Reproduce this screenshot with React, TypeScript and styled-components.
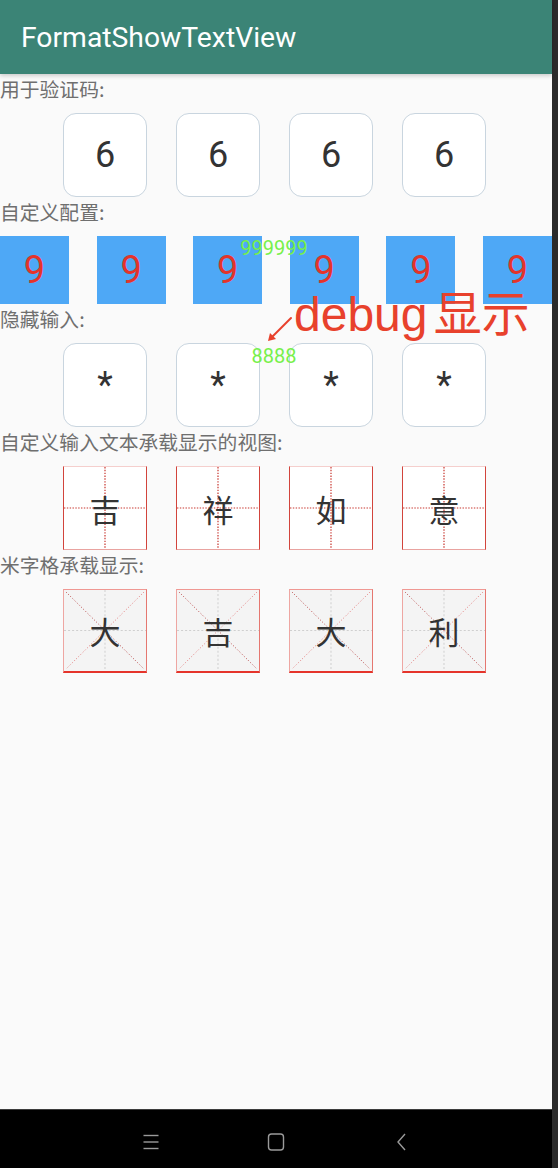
import React from "react";
import styled, { createGlobalStyle, css } from "styled-components";

const Global = createGlobalStyle`
  html, body { margin: 0; padding: 0; background: #2b2b2b; }
  body { font-family: Roboto, "Noto Sans CJK SC", sans-serif; }
  * { box-sizing: border-box; }
`;

const Screen = styled.div`
  display: flex;
  width: 558px;
  height: 1168px;
  overflow: hidden;
`;

const Phone = styled.div`
  width: 552px;
  display: flex;
  flex-direction: column;
  background: #fafafa;
`;

const Edge = styled.div`
  width: 6px;
  background: #2b2b2b;
`;

const AppBar = styled.header`
  height: 74px;
  flex-shrink: 0;
  background: #3b8476;
  display: flex;
  align-items: center;
  padding-left: 21px;
  box-shadow: 0 2px 4px rgba(0, 0, 0, 0.18);
  position: relative;
  z-index: 1;
`;

const Title = styled.h1`
  margin: 0;
  font: 400 28.3px Roboto, sans-serif;
  color: #ffffff;
`;

const Content = styled.main`
  flex: 1;
  position: relative;
`;

const Label = styled.div`
  padding-top: 3px;
  height: 27px;
  line-height: 24px;
  font-size: 19.8px;
  color: #6f6f6f;
  font-family: "Noto Sans CJK SC", sans-serif;
  white-space: nowrap;
`;

const Row = styled.div<{ $wide?: boolean }>`
  position: relative;
  display: flex;
  margin-top: 12px;
  ${(p) =>
    p.$wide
      ? css`
          justify-content: space-between;
        `
      : css`
          justify-content: center;
          gap: 29px;
          padding-right: 3px;
        `}
`;

type Kind = "round" | "blue" | "tian" | "mi";

const Cell = styled.div<{ $kind: Kind }>`
  position: relative;
  display: flex;
  align-items: center;
  justify-content: center;
  flex-shrink: 0;
  color: #333333;
  ${(p) => {
    switch (p.$kind) {
      case "round":
        return css`
          width: 84px;
          height: 84px;
          background: #ffffff;
          border: 1.5px solid #c9d5df;
          border-radius: 13px;
          font: 400 36px Roboto, sans-serif;
        `;
      case "blue":
        return css`
          width: 69px;
          height: 68px;
          background: #4ea8f6;
          color: #e3342b;
          font: 400 38px Roboto, sans-serif;
        `;
      case "tian":
        return css`
          width: 84px;
          height: 84px;
          background: #ffffff;
          border-left: 1.5px solid #d2443c;
          border-right: 1.5px solid #d2443c;
          border-top: 1.5px solid #f5cfcd;
          border-bottom: 1.5px solid #e9a3a0;
          font: 400 31px "Noto Sans CJK SC", sans-serif;
        `;
      case "mi":
        return css`
          width: 84px;
          height: 84px;
          background: #f4f4f4;
          border-top: 1.5px solid #f09893;
          border-left: 1.5px solid #eea6a2;
          border-right: 1.5px solid #e57770;
          border-bottom: 2px solid #e5342b;
          font: 400 31px "Noto Sans CJK SC", sans-serif;
        `;
    }
  }}
`;

const Glyph = styled.span`
  position: relative;
  z-index: 1;
  line-height: 1;
`;

const GridArt = styled.svg`
  position: absolute;
  inset: 0;
  width: 100%;
  height: 100%;
`;

const DebugText = styled.div<{ $top: number }>`
  position: absolute;
  top: ${(p) => p.$top}px;
  left: 0;
  right: 0;
  text-align: center;
  padding-right: 4px;
  font: 400 20px Roboto, sans-serif;
  line-height: 20px;
  color: #77f04a;
  z-index: 2;
  pointer-events: none;
`;

const Annotation = styled.div`
  position: absolute;
  left: 266px;
  top: 215px;
  display: flex;
  align-items: flex-start;
  z-index: 3;
  pointer-events: none;
`;

const Arrow = styled.svg`
  width: 28px;
  height: 28px;
  margin-top: 27px;
`;

const AnnotationText = styled.span`
  font: 400 48px "Liberation Sans", "Noto Sans CJK SC", sans-serif;
  color: #e8412c;
  line-height: 52px;
  white-space: nowrap;
  word-spacing: -7px;
`;

const NavBar = styled.nav`
  height: 59px;
  flex-shrink: 0;
  background: #000000;
  border-top: 1px solid #3c3c3c;
  display: flex;
  align-items: center;
  justify-content: center;
  gap: 107px;
  padding-top: 6px;
`;

const NavIcon = styled.svg`
  width: 18px;
  height: 18px;
  color: #9a9a9a;
`;

function TianArt() {
  return (
    <GridArt viewBox="0 0 81 81" preserveAspectRatio="none">
      <line x1="40.5" y1="0" x2="40.5" y2="81" stroke="#c8362f" strokeWidth="1.2" strokeDasharray="1.4 1.4" />
      <line x1="0" y1="40.5" x2="81" y2="40.5" stroke="#c8362f" strokeWidth="1.2" strokeDasharray="1.4 1.4" />
    </GridArt>
  );
}

function MiArt() {
  return (
    <GridArt viewBox="0 0 81 80" preserveAspectRatio="none">
      <line x1="40.5" y1="0" x2="40.5" y2="80" stroke="#cfcfcf" strokeWidth="1" strokeDasharray="2 2" />
      <line x1="0" y1="40" x2="81" y2="40" stroke="#cfcfcf" strokeWidth="1" strokeDasharray="2 2" />
      <line x1="2" y1="2" x2="79" y2="78" stroke="#b23a3a" strokeWidth="0.9" strokeDasharray="1 2" />
      <line x1="79" y1="2" x2="2" y2="78" stroke="#e07070" strokeWidth="0.9" strokeDasharray="1 2" />
    </GridArt>
  );
}

export default function App() {
  return (
    <>
      <Global />
      <Screen>
        <Phone>
          <AppBar>
            <Title>FormatShowTextView</Title>
          </AppBar>
          <Content>
            <Label>用于验证码:</Label>
            <Row>
              {["6", "6", "6", "6"].map((c, i) => (
                <Cell key={i} $kind="round">
                  <Glyph>{c}</Glyph>
                </Cell>
              ))}
            </Row>

            <Label>自定义配置:</Label>
            <Row $wide>
              {["9", "9", "9", "9", "9", "9"].map((c, i) => (
                <Cell key={i} $kind="blue">
                  <Glyph>{c}</Glyph>
                </Cell>
              ))}
              <DebugText $top={2}>999999</DebugText>
            </Row>

            <Label>隐藏输入:</Label>
            <Row>
              {["*", "*", "*", "*"].map((c, i) => (
                <Cell key={i} $kind="round">
                  <Glyph>{c}</Glyph>
                </Cell>
              ))}
              <DebugText $top={3}>8888</DebugText>
            </Row>

            <Label>自定义输入文本承载显示的视图:</Label>
            <Row>
              {["吉", "祥", "如", "意"].map((c, i) => (
                <Cell key={i} $kind="tian">
                  <TianArt />
                  <Glyph>{c}</Glyph>
                </Cell>
              ))}
            </Row>

            <Label>米字格承载显示:</Label>
            <Row>
              {["大", "吉", "大", "利"].map((c, i) => (
                <Cell key={i} $kind="mi">
                  <MiArt />
                  <Glyph>{c}</Glyph>
                </Cell>
              ))}
            </Row>

            <Annotation>
              <Arrow viewBox="0 0 28 28">
                <line x1="25" y1="2" x2="5" y2="22" stroke="#e8412c" strokeWidth="2" strokeLinecap="round" />
                <polygon points="2,25 4,17 10,23" fill="#e8412c" />
              </Arrow>
              <AnnotationText>debug 显示</AnnotationText>
            </Annotation>
          </Content>
          <NavBar>
            <NavIcon viewBox="0 0 18 18" fill="none" stroke="currentColor" strokeWidth="1.4">
              <line x1="1.5" y1="2.5" x2="16.5" y2="2.5" />
              <line x1="1.5" y1="9" x2="16.5" y2="9" />
              <line x1="1.5" y1="15.5" x2="16.5" y2="15.5" />
            </NavIcon>
            <NavIcon viewBox="0 0 18 18" fill="none" stroke="currentColor" strokeWidth="1.4">
              <rect x="1.5" y="1" width="15" height="16" rx="3" />
            </NavIcon>
            <NavIcon viewBox="0 0 18 18" fill="none" stroke="currentColor" strokeWidth="1.4">
              <polyline points="13,1 6,9 13,17" />
            </NavIcon>
          </NavBar>
        </Phone>
        <Edge />
      </Screen>
    </>
  );
}
